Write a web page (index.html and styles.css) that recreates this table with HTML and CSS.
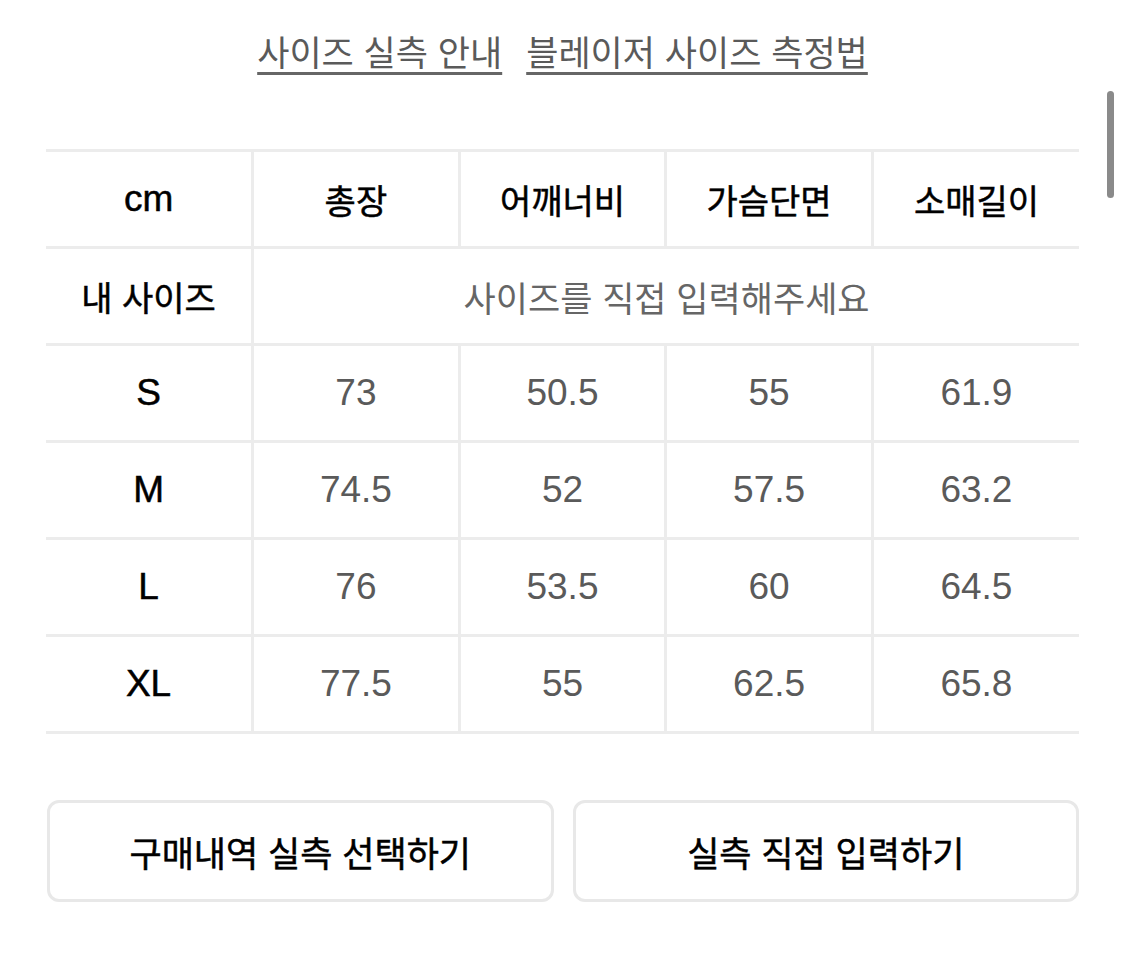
FILE: index.html
```html
<!DOCTYPE html>
<html lang="ko">
<head>
<meta charset="utf-8">
<title>사이즈 실측</title>
<link rel="stylesheet" href="styles.css">
</head>
<body>
<div class="page">
  <nav class="links">
    <a class="link" href="#">사이즈 실측 안내</a>
    <a class="link" href="#">블레이저 사이즈 측정법</a>
  </nav>
  <table class="size-table">
    <tr class="head">
      <td>cm</td><td>총장</td><td>어깨너비</td><td>가슴단면</td><td>소매길이</td>
    </tr>
    <tr>
      <td class="label">내 사이즈</td>
      <td class="hint" colspan="4">사이즈를 직접 입력해주세요</td>
    </tr>
    <tr><td class="label">S</td><td>73</td><td>50.5</td><td>55</td><td>61.9</td></tr>
    <tr><td class="label">M</td><td>74.5</td><td>52</td><td>57.5</td><td>63.2</td></tr>
    <tr><td class="label">L</td><td>76</td><td>53.5</td><td>60</td><td>64.5</td></tr>
    <tr><td class="label">XL</td><td>77.5</td><td>55</td><td>62.5</td><td>65.8</td></tr>
  </table>
  <div class="actions">
    <button class="btn">구매내역 실측 선택하기</button>
    <button class="btn">실측 직접 입력하기</button>
  </div>
  <div class="scrollbar"></div>
</div>
</body>
</html>
```
FILE: styles.css
```css
html, body {
  margin: 0;
  padding: 0;
  background: #fff;
}
body {
  font-family: "Liberation Sans", "Noto Sans CJK KR", sans-serif;
  color: #111;
}
.page {
  position: relative;
  width: 1125px;
  height: 958px;
  padding: 0 46px;
  box-sizing: border-box;
}
.links {
  display: flex;
  justify-content: center;
  gap: 24px;
  padding-top: 29px;
  height: 149px;
  box-sizing: border-box;
}
.link {
  font-family: "Noto Sans CJK KR", sans-serif;
  font-size: 35px;
  line-height: 44px;
  color: #5a5a5a;
  text-decoration: underline;
  text-decoration-thickness: 3px;
  text-underline-offset: 6px;
  text-decoration-color: #666;
}
.size-table {
  width: 100%;
  border-collapse: collapse;
  table-layout: fixed;
  border-top: 3px solid #ececec;
}
.size-table td {
  height: 94px;
  padding: 0;
  text-align: center;
  vertical-align: middle;
  border: 3px solid #ececec;
  font-size: 37px;
  color: #5a5a5a;
}
.size-table td:first-child { border-left: none; }
.size-table td:last-child { border-right: none; }
.size-table .head td,
.size-table td.label {
  color: #000;
  font-weight: 400;
  -webkit-text-stroke: 0.5px #000;
}
.size-table .head td {
  font-family: "Noto Sans CJK KR", sans-serif;
  font-size: 34px;
}
.size-table .head td:first-child {
  font-family: "Liberation Sans", sans-serif;
  font-size: 37px;
}
.size-table td.label {
  font-size: 37px;
}
.size-table tr:nth-child(2) td.label {
  font-family: "Noto Sans CJK KR", sans-serif;
  font-size: 34px;
}
.size-table td.hint {
  font-family: "Noto Sans CJK KR", sans-serif;
  font-size: 35px;
  color: #666;
  font-weight: 400;
}
.actions {
  display: flex;
  gap: 19px;
  margin-top: 66px;
  padding-left: 1px;
}
.btn {
  flex: 1;
  height: 102px;
  background: #fff;
  border: 3px solid #e8e8e8;
  border-radius: 12px;
  font-family: "Noto Sans CJK KR", sans-serif;
  font-size: 35px;
  font-weight: 400;
  color: #000;
  -webkit-text-stroke: 0.5px #000;
  padding: 0;
}
.scrollbar {
  position: absolute;
  right: 11px;
  top: 91px;
  width: 7px;
  height: 107px;
  border-radius: 4px;
  background: #8a8a8a;
}
```
